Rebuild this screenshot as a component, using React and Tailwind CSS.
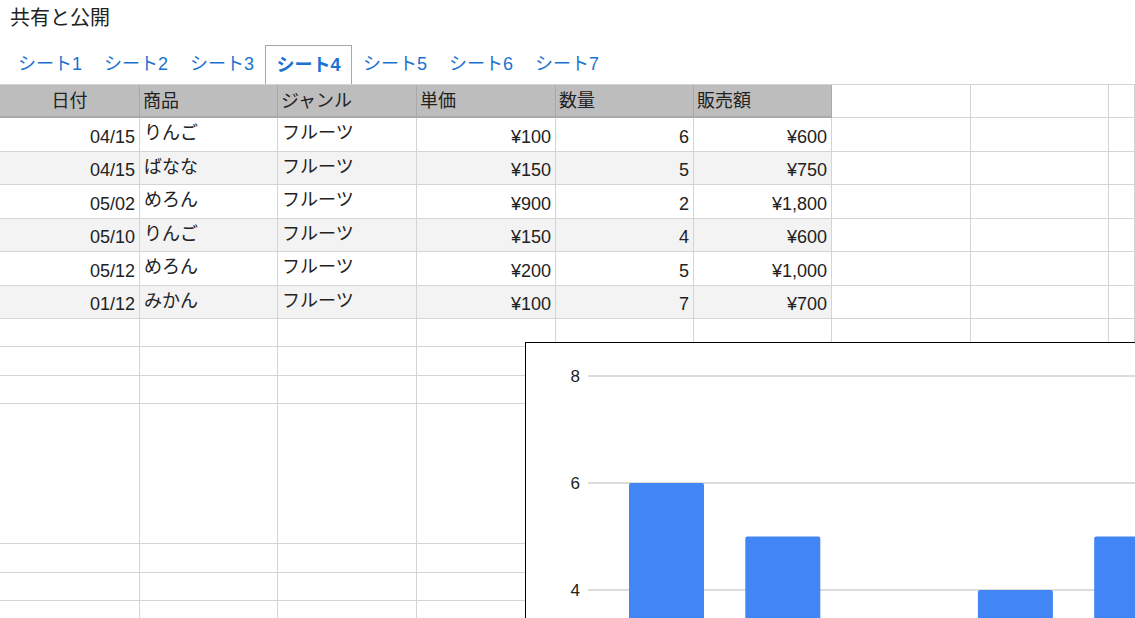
import React from "react";

const FONT = { fontFamily: '"Liberation Sans", Arial, "Noto Sans CJK JP", sans-serif' };

const tabs = ["シート1", "シート2", "シート3", "シート4", "シート5", "シート6", "シート7"];
const headers = ["日付", "商品", "ジャンル", "単価", "数量", "販売額"];
const rows = [
  ["04/15", "りんご", "フルーツ", "¥100", "6", "¥600"],
  ["04/15", "ばなな", "フルーツ", "¥150", "5", "¥750"],
  ["05/02", "めろん", "フルーツ", "¥900", "2", "¥1,800"],
  ["05/10", "りんご", "フルーツ", "¥150", "4", "¥600"],
  ["05/12", "めろん", "フルーツ", "¥200", "5", "¥1,000"],
  ["01/12", "みかん", "フルーツ", "¥100", "7", "¥700"],
];
const rowHeights = ["h-[34px]", "h-[33px]", "h-[34px]", "h-[33px]", "h-[34px]", "h-[33px]"];
const emptyHeights = ["h-[28px]", "h-[29px]", "h-[28px]", "h-[140px]", "h-[29px]", "h-[28px]", "h-[29px]"];
const cols = "grid grid-cols-[140px_138px_139px_139px_138px_138px_139px_138px_1fr]";

function Chart() {
  const values = [6, 5, 2, 4, 5, 7];
  const y = (v) => 33 + (8 - v) * 53.5;
  return (
    <div className="absolute left-[525px] top-[258px] w-[700px] h-[400px] bg-white border border-black">
      <svg width="700" height="400" className="block">
        {[8, 6, 4].map((v) => (
          <g key={v}>
            <line x1="62" x2="700" y1={y(v)} y2={y(v)} stroke="#d0d0d0" strokeWidth="1.5" />
            <text x="54" y={y(v) + 6} textAnchor="end" fontSize="17" fill="#222" style={FONT}>
              {v}
            </text>
          </g>
        ))}
        {values.map((v, i) => (
          <rect key={i} x={103 + i * 116.3} y={y(v)} width="75" height="400" rx="2" fill="#4285f4" />
        ))}
      </svg>
    </div>
  );
}

export default function App() {
  return (
    <div className="w-[1135px] h-[618px] overflow-hidden bg-white text-[#222]" style={FONT}>
      <div className="pl-[10px] pt-[4px] text-[20px] leading-[28px]">共有と公開</div>
      <div className="flex pl-[7px] mt-[13px] h-[39px]">
        {tabs.map((t, i) => (
          <div
            key={t}
            className={
              i === 3
                ? "px-[10px] w-[87px] border border-b-0 border-[#a8a8a8] flex items-center justify-center text-[18px] font-bold text-[#1a73d0]"
                : "px-[10px] w-[86px] border border-transparent flex items-center justify-center text-[18px] text-[#1a73d0]"
            }
          >
            {t}
          </div>
        ))}
      </div>
      <div className="relative">
        <div className={`${cols} h-[34px] border-t border-[#d4d4d4]`}>
          {headers.map((h, i) => (
            <div
              key={h}
              className={`bg-[#bdbdbd] border-r border-b-2 border-[#a9a9a9] flex items-center text-[18px] leading-none ${
                i === 0 ? "justify-center" : "pl-[3px]"
              }`}
            >
              {h}
            </div>
          ))}
          {[0, 1, 2].map((k) => (
            <div key={k} className="border-r border-b border-[#d4d4d4]" />
          ))}
        </div>
        {rows.map((r, ri) => (
          <div key={ri} className={`${cols} ${rowHeights[ri]}`}>
            {r.map((c, ci) => {
              const text = ci === 1 || ci === 2;
              return (
                <div
                  key={ci}
                  className={`border-r border-b border-[#d4d4d4] flex text-[18px] leading-[22px] ${
                    ri % 2 === 1 ? "bg-[#f3f3f3]" : "bg-white"
                  } ${text ? "items-start pt-[4px] pl-[4px]" : "items-end justify-end pb-[3px] pr-[4px]"}`}
                >
                  {c}
                </div>
              );
            })}
            {[0, 1, 2].map((k) => (
              <div key={k} className="border-r border-b border-[#d4d4d4]" />
            ))}
          </div>
        ))}
        {emptyHeights.map((h, ri) => (
          <div key={ri} className={`${cols} ${h}`}>
            {Array.from({ length: 9 }).map((_, k) => (
              <div key={k} className="border-r border-b border-[#d4d4d4]" />
            ))}
          </div>
        ))}
        <Chart />
      </div>
    </div>
  );
}
